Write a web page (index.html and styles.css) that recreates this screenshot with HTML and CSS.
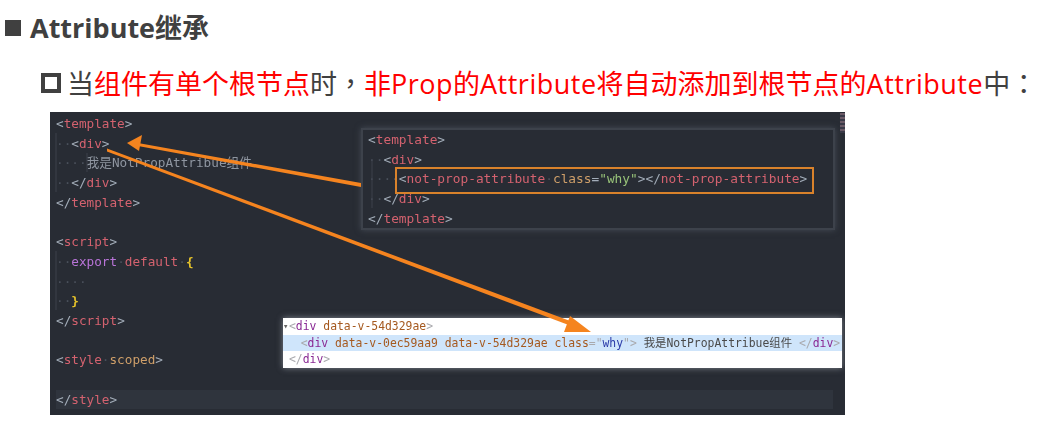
FILE: index.html
```html
<!DOCTYPE html>
<html lang="zh">
<head>
<meta charset="utf-8">
<title>Attribute继承</title>
<link rel="stylesheet" href="styles.css">
</head>
<body>
<main class="slide">
  <h1 class="title"><span class="bullet-solid"></span><span>Attribute继承</span></h1>
  <p class="point"><span class="bullet-hollow"></span><span>当<em>组件有单个根节点</em>时<span class="punct" lang="zh-Hant">，</span><em>非<span class="latin">Prop</span>的<span class="latin">Attribute</span>将自动添加到根节点的<span class="latin">Attribute</span></em>中<span class="punct" lang="zh-Hant">：</span></span></p>
  <section class="shot">
    <pre class="code"><span class="line"><i>&lt;</i><b>template</b><i>&gt;</i></span>
<span class="line"><u>··</u><i>&lt;</i><b>div</b><i>&gt;</i></span>
<span class="line"><u>····</u><s>我是NotPropAttribue组件</s></span>
<span class="line"><u>··</u><i>&lt;/</i><b>div</b><i>&gt;</i></span>
<span class="line"><i>&lt;/</i><b>template</b><i>&gt;</i></span>
<span class="line"> </span>
<span class="line"><i>&lt;</i><b>script</b><i>&gt;</i></span>
<span class="line"><u>··</u><span class="kw">export</span><u>·</u><b>default</b><u>·</u><span class="brace">{</span></span>
<span class="line"><u>····</u></span>
<span class="line"><u>··</u><span class="brace">}</span></span>
<span class="line"><i>&lt;/</i><b>script</b><i>&gt;</i></span>
<span class="line"> </span>
<span class="line"><i>&lt;</i><b>style</b><u>·</u><span class="attr">scoped</span><i>&gt;</i></span>
<span class="line"> </span>
<span class="line active"><i>&lt;/</i><b>style</b><i>&gt;</i></span></pre>

    <div class="minimap"></div>

    <pre class="code usage"><span class="line"><i>&lt;</i><b>template</b><i>&gt;</i></span>
<span class="line"><u>··</u><i>&lt;</i><b>div</b><i>&gt;</i></span>
<span class="line"><u>····</u><i>&lt;</i><b>not-prop-attribute</b><u>·</u><span class="attr">class</span><i>=</i><span class="str">"why"</span><i>&gt;&lt;/</i><b>not-prop-attribute</b><i>&gt;</i></span>
<span class="line"><u>··</u><i>&lt;/</i><b>div</b><i>&gt;</i></span>
<span class="line"><i>&lt;/</i><b>template</b><i>&gt;</i></span></pre>
    <div class="callout"></div>

    <pre class="devtools"><span class="row"><span class="caret">▾</span><span class="dt">&lt;</span><span class="tn">div</span> <span class="an">data-v-54d329ae</span><span class="dt">&gt;</span></span>
<span class="row selected">  <span class="dt">&lt;</span><span class="tn">div</span> <span class="an">data-v-0ec59aa9</span> <span class="an">data-v-54d329ae</span> <span class="an">class</span><span class="dt">="</span><span class="av">why</span><span class="dt">"&gt;</span> 我是NotPropAttribue组件 <span class="dt">&lt;/</span><span class="tn">div</span><span class="dt">&gt;</span></span>
<span class="row"><span class="dt">&lt;/</span><span class="tn">div</span><span class="dt">&gt;</span></span></pre>

    <svg class="arrows" viewBox="0 0 795 303" aria-hidden="true">
      <path class="guide" d="M6 21 V80 M6 139 V198 M37 41 V60 M322 47 V96"/>
      <path class="arrow-fill" d="M311 71 L311 75 L88 34 L88 31 Z"/>
      <path class="arrow-fill" d="M77 31 L92 23 L89 39 Z"/>
      <path class="arrow-fill" d="M57 36.5 L57 39.5 L524 215 L525.5 211 Z"/>
      <path class="arrow-fill" d="M541 220 L520 204 L514 220 Z"/>
    </svg>
  </section>
</main>
</body>
</html>
```
FILE: styles.css
```css
* { box-sizing: border-box; }

html, body {
  margin: 0;
  background: #fff;
}

body {
  font-family: "Open Sans", "Noto Sans CJK SC", sans-serif;
  color: #404040;
  overflow: hidden;
}

.slide {
  display: flex;
  flex-direction: column;
  height: 425px;
}

.title {
  display: flex;
  align-items: center;
  gap: 9px;
  margin: 0;
  padding: 9px 0 0 5px;
  height: 46px;
  font-size: 27px;
  line-height: 37px;
  font-weight: 700;
}

.bullet-solid {
  width: 16px;
  height: 16px;
  background: #404040;
}

.point {
  display: flex;
  align-items: center;
  gap: 6px;
  margin: 0;
  padding: 18px 0 0 41px;
  height: 56px;
  font-size: 27px;
  line-height: 38px;
  white-space: nowrap;
}

.point em {
  font-style: normal;
  color: #f00;
}

.latin {
  letter-spacing: 0.5px;
}

.punct {
  font-family: "Noto Sans CJK TC", sans-serif;
}

.bullet-hollow {
  width: 20px;
  height: 20px;
  border: 4px solid #404040;
  background: #fff;
}

.shot {
  position: relative;
  width: 795px;
  height: 303px;
  margin: 10px 0 0 50px;
  background: #282c34;
  overflow: hidden;
}

.code {
  margin: 0;
  padding: 2px 0 0 6px;
  font-family: "DejaVu Sans Mono", "Noto Sans CJK SC", monospace;
  font-size: 12.7px;
  line-height: 0;
  color: #abb2bf;
  filter: blur(0.45px);
}

.line {
  display: block;
  line-height: 19.7px;
  height: 19.7px;
}

.active {
  margin: 0 12px 0 0;
  background: #2f343d;
}

.code i { font-style: normal; color: #a3adb9; }
.code b { font-weight: 400; color: #d4626f; }
.code u { text-decoration: none; color: #4a505b; }
.code s { text-decoration: none; color: #8f96a1; }
.code .kw { color: #b974d8; }
.code .brace { color: #e6c32a; font-weight: 700; }
.code .attr { color: #cf9f69; }
.code .str { color: #98c379; }

.minimap {
  position: absolute;
  top: 1px;
  right: 0;
  width: 5px;
  height: 20px;
  background: repeating-linear-gradient(#6a5a66 0 2px, #3a3a48 2px 4px);
}

.usage {
  position: absolute;
  top: 18px;
  left: 313px;
  width: 470px;
  height: 98px;
  padding: 0 0 0 5px;
  font-size: 12.8px;
  background: #282c34;
  box-shadow: 0 0 0 2px #3d424b, 0 0 6px 2px rgba(90, 96, 106, 0.6);
}

.callout {
  position: absolute;
  top: 55px;
  left: 345px;
  width: 419px;
  height: 27px;
  border: 2px solid #d9822b;
}

.devtools {
  position: absolute;
  top: 206px;
  left: 233px;
  width: 559px;
  height: 50px;
  margin: 0;
  padding: 0 0 0 6px;
  background: #fff;
  box-shadow: 0 0 6px rgba(200, 205, 215, 0.55);
  font-family: "DejaVu Sans Mono", "Noto Sans CJK SC", monospace;
  font-size: 11.4px;
  line-height: 0;
  color: #4a4a4a;
  filter: blur(0.35px);
}

.row {
  display: block;
  position: relative;
  height: 16.5px;
  line-height: 16.5px;
}

.selected {
  margin-left: -6px;
  padding-left: 4px;
  background: #cfe5fb;
}

.caret {
  position: absolute;
  left: -6px;
  top: 0;
  font-size: 9px;
  color: #666;
}

.dt { color: #a9a9ad; }
.tn { color: #8a2a94; }
.an { color: #a5591f; }
.av { color: #2a3aa8; }

.arrows {
  position: absolute;
  inset: 0;
  width: 795px;
  height: 303px;
}

.guide {
  fill: none;
  stroke: #3c414b;
  stroke-width: 1;
}

.arrow-fill {
  fill: #f5841f;
}
```
